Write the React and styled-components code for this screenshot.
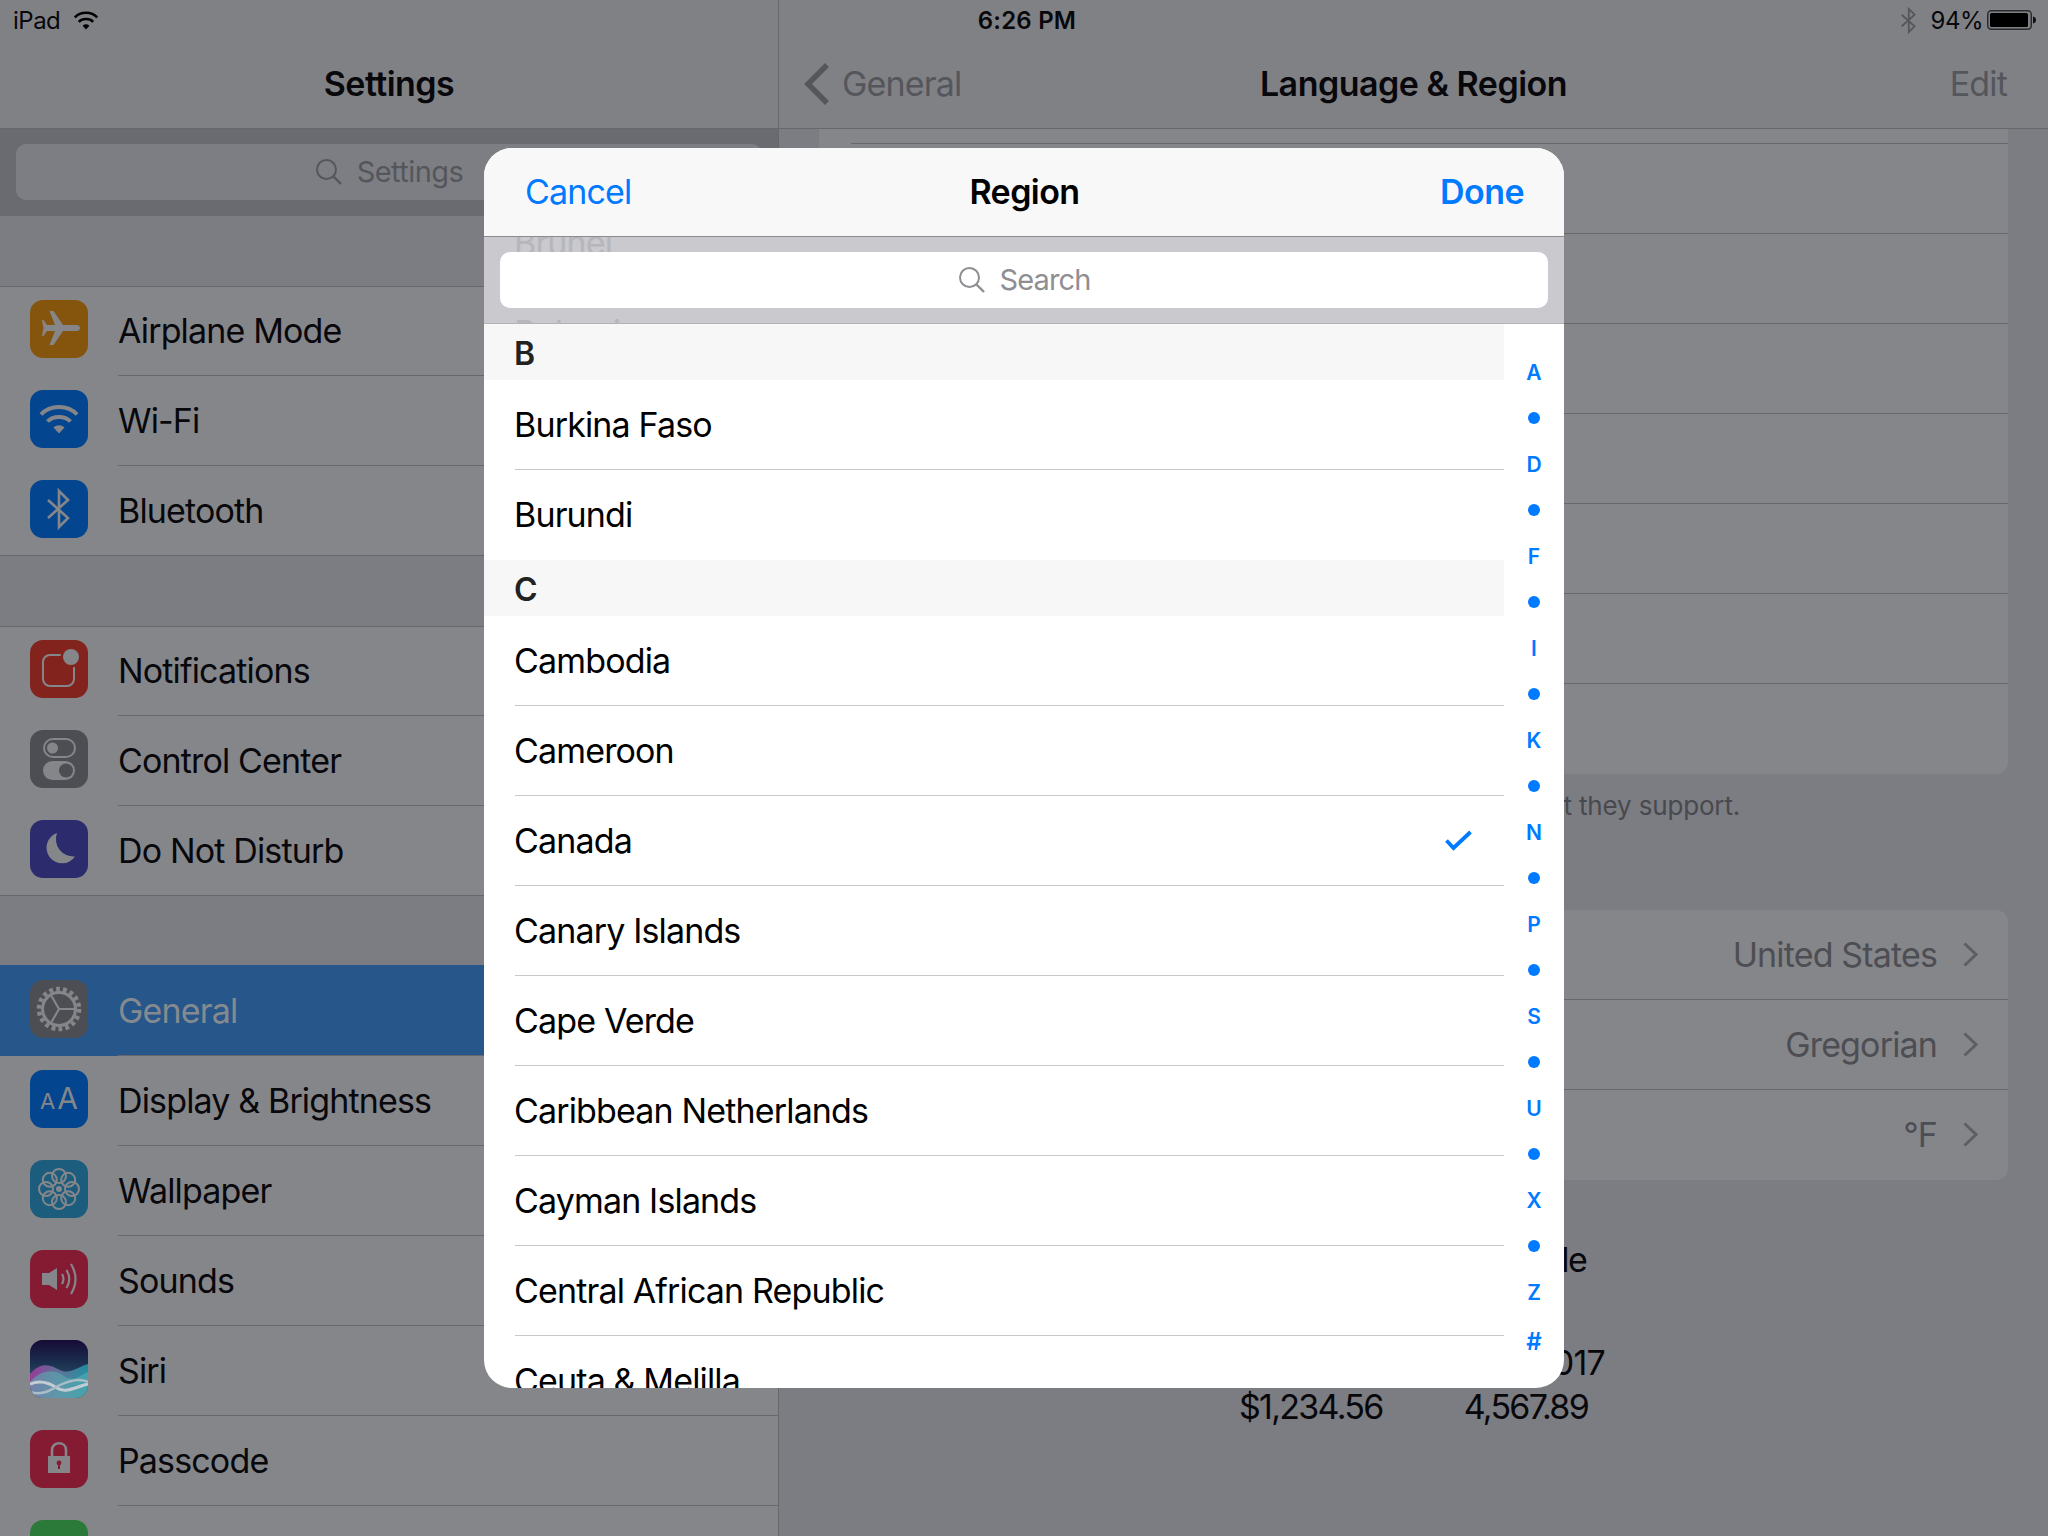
import styled, { createGlobalStyle } from "styled-components";

const FONT = `Inter, "Noto Sans", "Liberation Sans", sans-serif`;
const LINE = "#67686c";
const CELL = "#85868a";
const GROUND = "#7c7d82";
const BAR = "#808185";
const MUTED = "#55565b";
const GLYPH = "#85868a";
const BLUE = "#007aff";

const GlobalStyle = createGlobalStyle`
  html, body {
    margin: 0;
    padding: 0;
    background: ${GROUND};
  }
  * {
    box-sizing: border-box;
  }
`;

const Screen = styled.div`
  position: relative;
  display: flex;
  width: 2048px;
  height: 1536px;
  overflow: hidden;
  font-family: ${FONT};
  font-size: 34px;
  letter-spacing: -0.85px;
  color: #08080c;
  background: ${GROUND};
`;

const StatusBar = styled.div`
  position: absolute;
  top: 0;
  left: 0;
  right: 0;
  height: 40px;
  display: grid;
  grid-template-columns: 1fr auto 1fr;
  align-items: center;
  padding: 0 11px 0 13px;
  font-size: 24px;
  letter-spacing: -0.5px;
`;

const StatusSide = styled.div`
  display: flex;
  align-items: center;
  justify-content: ${(p) => (p.$end ? "flex-end" : "flex-start")};
  gap: ${(p) => (p.$end ? "4px" : "14px")};
`;

const Clock = styled.div`
  font-weight: 600;
  letter-spacing: 0.2px;
  padding-left: 4px;
`;

const Sidebar = styled.aside`
  flex: none;
  width: 779px;
  height: 100%;
  border-right: 1px solid ${LINE};
`;

const SideNav = styled.header`
  height: 129px;
  padding: 40px 0 2px;
  display: flex;
  align-items: center;
  justify-content: center;
  background: ${BAR};
  border-bottom: 1px solid ${LINE};
  font-weight: 600;
  letter-spacing: -0.55px;
`;

const SearchStrip = styled.div`
  height: 87px;
  padding: 15px 16px 16px;
  background: #6a6b70;
`;

const SideSearch = styled.div`
  height: 56px;
  display: flex;
  align-items: center;
  justify-content: center;
  gap: 15px;
  padding-bottom: 1px;
  border-radius: 10px;
  background: #7d7e83;
  font-size: 29px;
  letter-spacing: -0.55px;
  color: ${MUTED};
`;

const Section = styled.section`
  margin-top: ${(p) => (p.$blueTop ? "69px" : "70px")};
  background: ${CELL};
  border-top: 1px solid ${(p) => (p.$blueTop ? "#27568a" : LINE)};
  box-shadow: inset 0 -1px 0 ${LINE};
`;

const Row = styled.div`
  height: ${(p) => (p.$trim ? "89px" : "90px")};
  display: flex;
  padding-left: 30px;
  background: ${(p) => (p.$selected ? "#27568a" : "transparent")};
  color: ${(p) => (p.$selected ? "#858a90" : "inherit")};
`;

const RowBody = styled.div`
  flex: 1;
  margin-left: 30px;
  display: flex;
  align-items: center;
  padding-bottom: 1px;
  border-bottom: ${(p) => (p.$last ? "none" : `1px solid ${LINE}`)};
`;

const IconTile = styled.div`
  flex: none;
  width: 58px;
  height: 58px;
  margin-top: ${(p) => (p.$trim ? "13px" : "14px")};
  border-radius: 13px;
  overflow: hidden;
  display: flex;
  align-items: baseline;
  justify-content: center;
  background: ${(p) => p.$bg};
  color: ${GLYPH};
  svg {
    display: block;
  }
`;

const SmallA = styled.span`
  font-size: 22px;
  line-height: 56px;
  letter-spacing: 0;
`;

const BigA = styled.span`
  font-size: 30px;
  line-height: 56px;
  letter-spacing: 0;
  margin-left: 2px;
`;

const Detail = styled.main`
  flex: 1;
  height: 100%;
`;

const DetailNav = styled.header`
  height: 129px;
  padding: 40px 33px 2px;
  display: grid;
  grid-template-columns: 1fr auto 1fr;
  align-items: center;
  background: ${BAR};
  border-bottom: 1px solid ${LINE};
`;

const BackLink = styled.div`
  display: flex;
  align-items: center;
  gap: 13px;
  margin-left: -8px;
  color: ${MUTED};
  svg {
    margin-top: 2px;
  }
`;

const NavTitle = styled.div`
  font-weight: 600;
  letter-spacing: -0.5px;
`;

const EditLink = styled.div`
  justify-self: end;
  margin-right: 8px;
  color: ${MUTED};
`;

const DetailBody = styled.div`
  padding: 0 40px;
`;

const LanguageGroup = styled.div`
  height: 645px;
  padding-top: 14px;
  background: ${CELL};
  border-radius: 0 0 12px 12px;
`;

const LanguageRow = styled.div`
  height: 90px;
  margin-left: 32px;
  border-top: 1px solid ${LINE};
`;

const GroupNote = styled.p`
  margin: 0;
  padding: 14px 32px 0;
  height: 136px;
  font-size: 26px;
  line-height: 36px;
  letter-spacing: -0.16px;
  color: #48494e;
`;

const FormatGroup = styled.div`
  height: 270px;
  background: ${CELL};
  border-radius: 12px;
  overflow: hidden;
`;

const FormatRow = styled.div`
  height: 90px;
  display: flex;
  align-items: center;
  justify-content: space-between;
  padding: 0 30px 1px 32px;
  box-shadow: ${(p) => (p.$last ? "none" : `inset 0 -1px 0 ${LINE}`)};
`;

const FormatValue = styled.div`
  display: flex;
  align-items: center;
  gap: 26px;
  color: #4d4e53;
`;

const FormatExample = styled.div`
  display: flex;
  flex-direction: column;
  align-items: center;
  padding-top: 58px;
  line-height: 44px;
`;

const ExampleTitle = styled.div`
  letter-spacing: -1.6px;
`;

const ExampleDate = styled.div`
  margin-top: 59px;
`;

const ExampleNumbers = styled.div`
  display: flex;
  gap: 81px;
  letter-spacing: -1.7px;
`;

const Scrim = styled.div`
  position: absolute;
  inset: 0;
  display: flex;
  align-items: center;
  justify-content: center;
`;

const Sheet = styled.div`
  width: 1080px;
  height: 1240px;
  display: flex;
  flex-direction: column;
  border-radius: 28px;
  overflow: hidden;
  background: #fff;
  color: #000;
`;

const SheetHeader = styled.div`
  flex: none;
  height: 89px;
  display: grid;
  grid-template-columns: 1fr auto 1fr;
  align-items: center;
  padding: 0 40px 1px 41px;
  background: #f8f8f8;
  border-bottom: 1px solid #8b8b8f;
`;

const SheetAction = styled.div`
  color: ${BLUE};
  font-weight: ${(p) => (p.$strong ? 600 : 400)};
  letter-spacing: ${(p) => (p.$strong ? "-0.55px" : "inherit")};
  justify-self: ${(p) => (p.$strong ? "end" : "start")};
`;

const SheetTitle = styled.div`
  font-weight: 600;
  letter-spacing: -0.55px;
`;

const SheetSearch = styled.div`
  position: relative;
  flex: none;
  height: 87px;
  padding: 15px 16px 0;
  background: #c9c9ce;
  border-bottom: 1px solid #b2b2b6;
  overflow: hidden;
`;

const GhostRow = styled.div`
  position: absolute;
  left: 30px;
  top: ${(p) => p.$top}px;
  line-height: 40px;
  color: #b6b6bb;
`;

const SearchField = styled.div`
  position: relative;
  height: 56px;
  display: flex;
  align-items: center;
  justify-content: center;
  gap: 15px;
  padding-bottom: 2px;
  border-radius: 10px;
  background: #fff;
  font-size: 29px;
  letter-spacing: -0.9px;
  color: #8e8e93;
`;

const SheetBody = styled.div`
  flex: 1;
  min-height: 0;
  display: flex;
`;

const RegionList = styled.div`
  flex: 1;
  min-width: 0;
`;

const LetterHeader = styled.div`
  height: 56px;
  display: flex;
  align-items: center;
  padding: 2px 0 0 30px;
  background: #f7f7f7;
  color: #222;
  font-weight: 600;
  font-size: 32px;
`;

const RegionRow = styled.div`
  height: 90px;
  margin-left: 31px;
  padding: 0 32px 1px 0;
  display: flex;
  align-items: center;
  justify-content: space-between;
  border-bottom: ${(p) => (p.$plain ? "none" : "1px solid #c8c8cc")};
`;

const RegionName = styled.span`
  margin-left: -1px;
`;

const IndexColumn = styled.div`
  flex: none;
  width: 60px;
  padding-top: 25px;
  display: flex;
  flex-direction: column;
  align-items: center;
  color: ${BLUE};
  font-size: 21px;
  font-weight: 600;
  letter-spacing: 0;
`;

const IndexItem = styled.div`
  height: ${(p) => (p.$tall ? "54px" : "46px")};
  display: flex;
  align-items: center;
  justify-content: center;
  line-height: 1;
  font-size: ${(p) => (p.$tall ? "24px" : "inherit")};
`;

const IndexDot = styled.span`
  width: 12px;
  height: 12px;
  border-radius: 50%;
  background: ${BLUE};
`;

const WifiGlyph = ({ width = 58, height = 58, box = "0 0 58 58", color = "currentColor" }) => (
  <svg width={width} height={height} viewBox={box} fill="none" stroke={color} strokeWidth="4">
    <path d="M11 24.5C20 14.5 38 14.5 47 24.5" />
    <path d="M17.5 31.5C23 25.5 35 25.5 40.5 31.5" />
    <path d="M23.5 37.5L29 43.5L34.5 37.5C31 34.5 27 34.5 23.5 37.5Z" fill={color} stroke="none" />
  </svg>
);

const BluetoothGlyph = ({ width = 58, height = 58, color = "currentColor", box = "0 0 58 58", weight = 2.6 }) => (
  <svg width={width} height={height} viewBox={box} fill="none" stroke={color} strokeWidth={weight}>
    <path d="M18 20L38 38L29 47V11L38 20L18 38" />
  </svg>
);

const SearchGlyph = ({ color }) => (
  <svg width="27" height="27" viewBox="0 0 27 27" fill="none" stroke={color} strokeWidth="2">
    <circle cx="11.5" cy="11.5" r="9.5" />
    <path d="M18.5 18.5L26 26" strokeWidth="2.4" />
  </svg>
);

const Chevron = () => (
  <svg width="15" height="25" viewBox="0 0 15 25" fill="none" stroke="#5e5f63" strokeWidth="3">
    <path d="M1.5 1.5L13 12.5L1.5 23.5" />
  </svg>
);

const Battery = () => (
  <svg width="50" height="20" viewBox="0 0 50 20">
    <rect x="0.75" y="0.75" width="43.5" height="18.5" rx="3.5" fill="none" stroke="#2b2c30" strokeWidth="1.5" />
    <rect x="3" y="3" width="38" height="14" rx="1.5" fill="#000" />
    <path d="M46 6.5C48 7 49 8 49 10C49 12 48 13 46 13.5Z" fill="#111" />
  </svg>
);

const Airplane = () => (
  <svg width="58" height="58" viewBox="0 0 58 58" fill="currentColor">
    <path d="M46 25H33L23.5 11H19.5L25 25H17L13.5 20H12L13.5 28L12 36H13.5L17 31H25L19.5 45H23.5L33 31H46C48.5 31 50 30 50 28C50 26 48.5 25 46 25Z" />
  </svg>
);

const Notifications = () => (
  <svg width="58" height="58" viewBox="0 0 58 58" fill="none">
    <rect x="13" y="15" width="31" height="31" rx="7" stroke="currentColor" strokeWidth="2" />
    <circle cx="41" cy="17" r="10.5" fill="#82231e" />
    <circle cx="41" cy="17" r="8" fill="currentColor" />
  </svg>
);

const Toggles = () => (
  <svg width="58" height="58" viewBox="0 0 58 58" fill="none">
    <rect x="14" y="9" width="31" height="18" rx="9" stroke="currentColor" strokeWidth="2" />
    <circle cx="22.5" cy="18" r="5.5" fill="currentColor" />
    <rect x="13" y="31" width="32" height="19" rx="9.5" fill="currentColor" />
    <circle cx="36" cy="40.5" r="7" fill="#4d4e53" />
  </svg>
);

const Moon = () => (
  <svg width="58" height="58" viewBox="0 0 58 58" fill="currentColor">
    <path d="M27 13A15.6 15.6 0 1 0 45 36.5A17.5 17.5 0 0 1 27 13Z" />
  </svg>
);

const Gear = () => (
  <svg width="58" height="58" viewBox="0 0 58 58" fill="none" stroke="currentColor">
    <circle cx="29" cy="29" r="20" strokeWidth="4.6" strokeDasharray="3.8 3.18" />
    <circle cx="29" cy="29" r="16.5" strokeWidth="3" />
    <path d="M29 29H44M29 29L21.5 16M29 29L21.5 42" strokeWidth="2.2" />
  </svg>
);

const Flower = () => (
  <svg width="58" height="58" viewBox="0 0 58 58" fill="none" stroke="currentColor" strokeWidth="2">
    {[0, 45, 90, 135, 180, 225, 270, 315].map((angle) => (
      <circle key={angle} cx="29" cy="16" r="7" transform={`rotate(${angle} 29 29)`} />
    ))}
    <circle cx="29" cy="29" r="3" fill="currentColor" stroke="none" />
  </svg>
);

const Speaker = () => (
  <svg width="58" height="58" viewBox="0 0 58 58" fill="none" stroke="currentColor" strokeWidth="2.2">
    <path d="M12 23H19L27 18V40L19 35H12Z" fill="currentColor" stroke="none" />
    <path d="M32 24Q35 29 32 34" />
    <path d="M36.5 20Q42 29 36.5 38" />
    <path d="M41 14Q50 29 41 44" />
  </svg>
);

const SiriArt = () => (
  <svg width="58" height="58" viewBox="0 0 58 58">
    <defs>
      <linearGradient id="siriSky" x1="0" y1="0" x2="0" y2="1">
        <stop offset="0" stopColor="#170b36" />
        <stop offset="0.4" stopColor="#1b3050" />
        <stop offset="1" stopColor="#3f6a80" />
      </linearGradient>
      <linearGradient id="siriWave" x1="0" y1="0" x2="1" y2="0">
        <stop offset="0" stopColor="#b33aa6" />
        <stop offset="0.5" stopColor="#6d7fa8" />
        <stop offset="1" stopColor="#21a3b4" />
      </linearGradient>
    </defs>
    <rect width="58" height="58" fill="url(#siriSky)" />
    <path d="M0 34C12 20 22 26 30 30C40 35 50 26 58 24V58H0Z" fill="url(#siriWave)" opacity="0.8" />
    <path d="M0 42C10 30 24 28 34 36C44 43 52 34 58 32V58H0Z" fill="#58aeb0" opacity="0.6" />
    <path d="M0 44C10 40 18 42 27 48C36 54 48 46 58 44" fill="none" stroke="#c3ccd3" strokeWidth="3" />
    <path d="M0 52C12 56 20 50 28 46C38 41 50 38 58 42" fill="none" stroke="#a9bcc7" strokeWidth="2.5" />
  </svg>
);

const Padlock = () => (
  <svg width="58" height="58" viewBox="0 0 58 58" fill="none">
    <path d="M22 27V20C22 11 36 11 36 20V27" stroke="currentColor" strokeWidth="2.6" />
    <rect x="18" y="26" width="22" height="17" fill="currentColor" />
    <circle cx="29" cy="33" r="2.4" fill="#851a33" />
    <rect x="28" y="33" width="2" height="6" fill="#851a33" />
  </svg>
);

const settingsSections = [
  [
    { name: "Airplane Mode", bg: "#85550e", icon: <Airplane /> },
    { name: "Wi-Fi", bg: "#03468f", icon: <WifiGlyph /> },
    { name: "Bluetooth", bg: "#03468f", icon: <BluetoothGlyph /> },
  ],
  [
    { name: "Notifications", bg: "#82231e", icon: <Notifications /> },
    { name: "Control Center", bg: "#4d4e53", icon: <Toggles /> },
    { name: "Do Not Disturb", bg: "#2c2b6e", icon: <Moon /> },
  ],
  [
    { name: "General", bg: "#4d4e53", icon: <Gear />, selected: true },
    {
      name: "Display & Brightness",
      bg: "#03468f",
      icon: (
        <>
          <SmallA>A</SmallA>
          <BigA>A</BigA>
        </>
      ),
    },
    { name: "Wallpaper", bg: "#1c5d7e", icon: <Flower /> },
    { name: "Sounds", bg: "#851a33", icon: <Speaker /> },
    { name: "Siri", bg: "#223a58", icon: <SiriArt /> },
    { name: "Passcode", bg: "#851a33", icon: <Padlock /> },
    { name: "Battery", bg: "#2b7a3a", icon: null },
  ],
];

const regionGroups = [
  { letter: "B", names: ["Burkina Faso", "Burundi"] },
  {
    letter: "C",
    names: [
      "Cambodia",
      "Cameroon",
      "Canada",
      "Canary Islands",
      "Cape Verde",
      "Caribbean Netherlands",
      "Cayman Islands",
      "Central African Republic",
      "Ceuta & Melilla",
    ],
  },
];

const indexLetters = ["A", "D", "F", "I", "K", "N", "P", "S", "U", "X", "Z"];

const formatRows = [
  { label: "Region", value: "United States" },
  { label: "Calendar", value: "Gregorian" },
  { label: "Temperature Unit", value: "°F" },
];

export default function App() {
  return (
    <>
      <GlobalStyle />
      <Screen>
        <Sidebar>
          <SideNav>Settings</SideNav>
          <SearchStrip>
            <SideSearch>
              <SearchGlyph color={MUTED} />
              Settings
            </SideSearch>
          </SearchStrip>
          {settingsSections.map((rows, idx) => (
            <Section key={idx} $blueTop={rows[0].selected}>
              {rows.map((row, rowIdx) => {
                const trim = rowIdx === 0 && !row.selected;
                return (
                  <Row key={row.name} $selected={row.selected} $trim={trim}>
                    <IconTile $bg={row.bg} $trim={trim}>
                      {row.icon}
                    </IconTile>
                    <RowBody $last={rowIdx === rows.length - 1}>{row.name}</RowBody>
                  </Row>
                );
              })}
            </Section>
          ))}
        </Sidebar>

        <Detail>
          <DetailNav>
            <BackLink>
              <svg width="25" height="42" viewBox="0 0 25 42" fill="none" stroke={MUTED} strokeWidth="5.5">
                <path d="M23 2L4 21L23 40" />
              </svg>
              General
            </BackLink>
            <NavTitle>Language & Region</NavTitle>
            <EditLink>Edit</EditLink>
          </DetailNav>
          <DetailBody>
            <LanguageGroup>
              {[0, 1, 2, 3, 4, 5, 6].map((n) => (
                <LanguageRow key={n} />
              ))}
            </LanguageGroup>
            <GroupNote>Apps and websites will use the first language in this list that they support.</GroupNote>
            <FormatGroup>
              {formatRows.map((row, idx) => (
                <FormatRow key={row.label} $last={idx === formatRows.length - 1}>
                  {row.label}
                  <FormatValue>
                    {row.value}
                    <Chevron />
                  </FormatValue>
                </FormatRow>
              ))}
            </FormatGroup>
            <FormatExample>
              <ExampleTitle>Region Format Example</ExampleTitle>
              <ExampleDate>Monday, January 9, 2017</ExampleDate>
              <ExampleNumbers>
                <span>$1,234.56</span>
                <span>4,567.89</span>
              </ExampleNumbers>
            </FormatExample>
          </DetailBody>
        </Detail>

        <StatusBar>
          <StatusSide>
            iPad
            <WifiGlyph width={24} height={20} box="10 12.5 38 32" color="#000" />
          </StatusSide>
          <Clock>6:26 PM</Clock>
          <StatusSide $end>
            <BluetoothGlyph width={28} height={27} box="14 8 43 42" color={MUTED} weight={2.8} />
            94%
            <Battery />
          </StatusSide>
        </StatusBar>

        <Scrim>
          <Sheet>
            <SheetHeader>
              <SheetAction>Cancel</SheetAction>
              <SheetTitle>Region</SheetTitle>
              <SheetAction $strong>Done</SheetAction>
            </SheetHeader>
            <SheetSearch>
              <GhostRow $top={-14}>Brunei</GhostRow>
              <GhostRow $top={76}>Bulgaria</GhostRow>
              <SearchField>
                <SearchGlyph color="#8e8e93" />
                Search
              </SearchField>
            </SheetSearch>
            <SheetBody>
              <RegionList>
                {regionGroups.map((group) => (
                  <div key={group.letter}>
                    <LetterHeader>{group.letter}</LetterHeader>
                    {group.names.map((name, idx) => (
                      <RegionRow key={name} $plain={idx === group.names.length - 1}>
                        <RegionName>{name}</RegionName>
                        {name === "Canada" && (
                          <svg width="27" height="21" viewBox="0 0 27 21" fill="none" stroke={BLUE} strokeWidth="3.8">
                            <path d="M1.5 10.5L8.5 18L25.5 2" />
                          </svg>
                        )}
                      </RegionRow>
                    ))}
                  </div>
                ))}
              </RegionList>
              <IndexColumn>
                {indexLetters.map((letter, idx) => (
                  <div key={letter}>
                    <IndexItem>{letter}</IndexItem>
                    {idx < indexLetters.length - 1 && (
                      <IndexItem>
                        <IndexDot />
                      </IndexItem>
                    )}
                  </div>
                ))}
                <IndexItem $tall>#</IndexItem>
              </IndexColumn>
            </SheetBody>
          </Sheet>
        </Scrim>
      </Screen>
    </>
  );
}
